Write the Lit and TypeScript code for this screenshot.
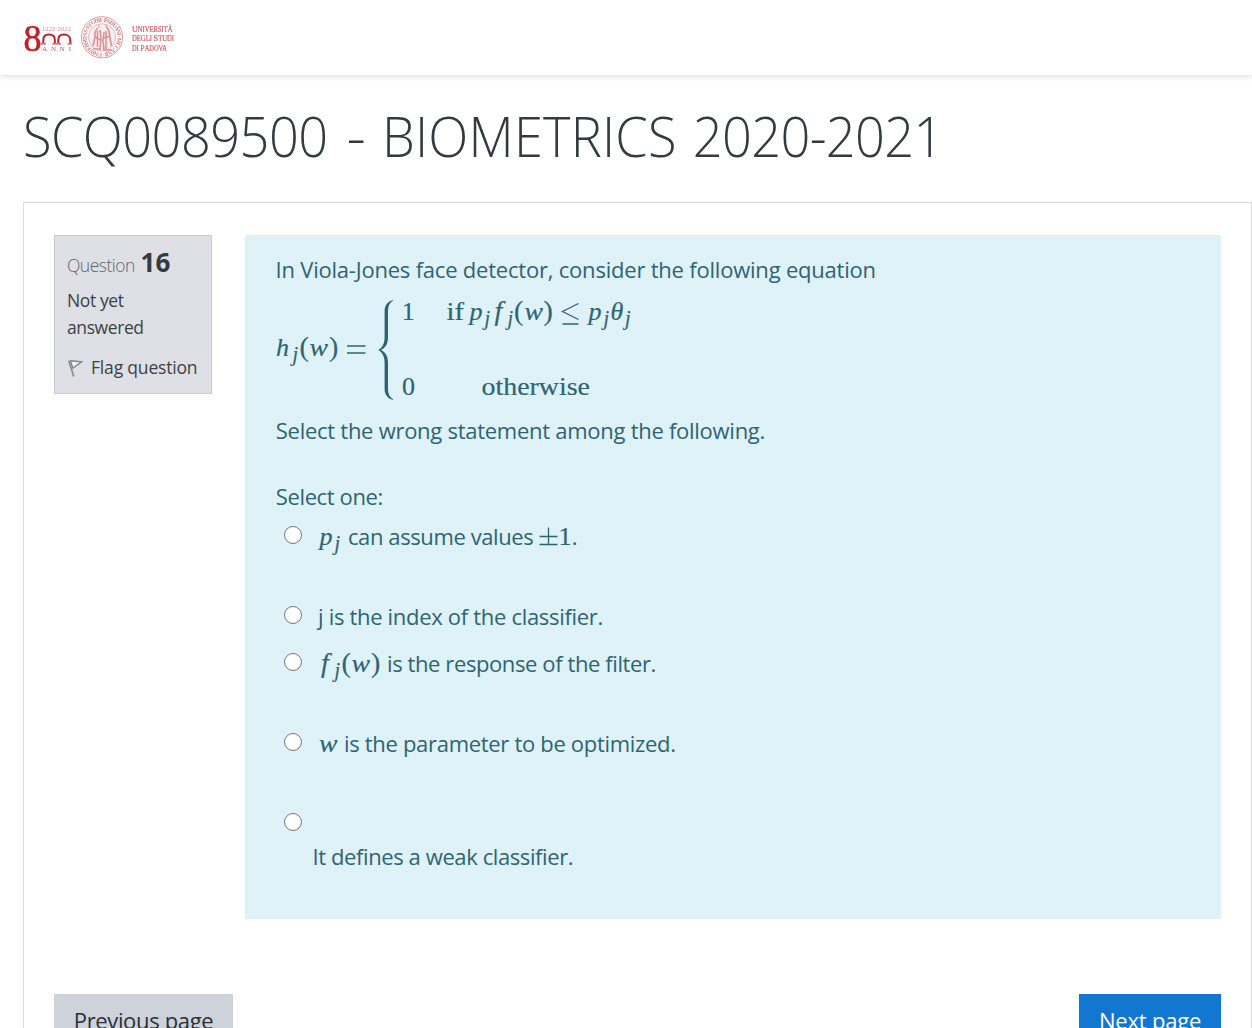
import { LitElement, html, svg, css } from "lit";
import { customElement } from "lit/decorators.js";

const mathCss = css`
  .math { overflow: visible; fill: #2f6473; font-family: "Liberation Serif", serif; font-size: 26px; letter-spacing: 0; }
  .math text { stroke: #2f6473; stroke-width: 0.200px; }
  .it { font-style: italic; }
  .f { font-style: italic; font-size: 28px; }
  .par { font-size: 28px; }
  .sub { font-style: italic; font-size: 20px; }
`;

@customElement("site-logo")
class SiteLogo extends LitElement {
  static styles = css`
    :host { display: block; }
    svg { display: block; }
    .serif { font-family: "Liberation Serif", serif; }
    .soft { filter: blur(0.4px); }
  `;
  render() {
    const ring = "UNIVERSITAS · STUDII · PADUANI · MCCXXII ·";
    return html`<svg width="152" height="46" viewBox="23 14 152 46">
      <g class="serif soft" fill="#c02026">
        <text x="23.500" y="51" font-size="37" textLength="18" lengthAdjust="spacingAndGlyphs" stroke="#c02026" stroke-width=".6">8</text>
        <path d="M43.300 43V40C43.300 36.500 45.500 34.600 49 34.600S54.800 36.500 54.800 40V43M58.300 43V40C58.300 36.500 60.500 34.600 64 34.600S70.300 36.500 70.300 40V43" fill="none" stroke="#c02026" stroke-width="2"/>
        <path d="M40.500 43.800H46M52.500 43.800H61M67.500 43.800H72" stroke="#c8454a" stroke-width="1.200" />
        <text x="42" y="31" font-size="6.500" fill="#d98f92" textLength="29" lengthAdjust="spacingAndGlyphs">1222·2022</text>
        <text x="42" y="51" font-size="7" fill="#c9565b" textLength="29">ANNI</text>
      </g>
      <g class="soft" fill="none" stroke="#dc9093">
        <circle cx="102" cy="37.300" r="20.600" stroke-width=".9" />
        <circle cx="102" cy="37.300" r="13.600" stroke-width=".6" fill="#fbeeee" />
        <path id="ring" d="M102 52.800A15.500 15.500 0 1 1 102.100 52.800" stroke="none" />
        <text class="serif" fill="#d0787b" stroke="none" font-size="5.800" font-weight="700"><textPath href="#ring" textLength="96">${ring}</textPath></text>
        <g stroke="#dc9295" stroke-width="1.600">
          <path d="M97.500 28c-2 2-3 5-2.500 9l-2 9M97.500 31v16M100 30l1 8-1 12M95 37l5 3M93 49h8" />
          <path d="M106.500 27c2 2 3 4 3 8l2 11M106 31v18M104 32l-1 9 1 9M104 38l6-2M103 50h9M98 26.500h1.500M105.500 26h1.500" />
        </g>
      </g>
      <g class="serif soft" fill="#cc5f64" stroke="#cc5f64" stroke-width=".2">
        <text x="132" y="31.600" font-size="9" textLength="40.500" lengthAdjust="spacingAndGlyphs">U<tspan font-size="7.300">NIVERSITÀ</tspan></text>
        <text x="132" y="41.300" font-size="7.300" textLength="42" lengthAdjust="spacingAndGlyphs">DEGLI <tspan font-size="9">S</tspan>TUDI</text>
        <text x="132" y="51" font-size="7.300" textLength="35" lengthAdjust="spacingAndGlyphs">DI <tspan font-size="9">P</tspan>ADOVA</text>
      </g>
    </svg>`;
  }
}

@customElement("question-info")
class QuestionInfo extends LitElement {
  static styles = css`
    :host { display: block; box-sizing: border-box; width: 158px; height: 159px; padding: 13px 12px 0;
      background: #dee0e5; border: 1px solid #c6cdd7; color: #3d4146; font-size: 17.500px; line-height: 27px; }
    .no { height: 33px; line-height: 33px; font-weight: 300; color: #62676d; white-space: nowrap; letter-spacing: -0.500px; }
    .no b { font-size: 26px; line-height: 1; font-weight: 700; color: #343a40; letter-spacing: 0.300px; margin-left: 1.500px; }
    .state { margin-top: 5px; height: 54px; letter-spacing: -0.400px; }
    .flag { display: flex; align-items: center; margin-top: 13px; white-space: nowrap; letter-spacing: -0.180px; }
    svg { width: 24px; height: 20px; flex: none; }
  `;
  render() {
    return html`
      <div class="no">Question <b>16</b></div>
      <div class="state">Not yet answered</div>
      <div class="flag">
        <svg viewBox="67 358.500 24 20" fill="none">
          <path d="M70.500 361.200L81.600 362.200L73.500 368.200" stroke="#858585" stroke-width="1.400" fill="#eceef0"/>
          <path d="M68.800 361.200L73.700 377" stroke="#8e8e8c" stroke-width="1.800"/>
          <path d="M70.400 361L73.200 369.500" stroke="#6f6f6f" stroke-width="1"/>
        </svg>Flag question
      </div>`;
  }
}

@customElement("classifier-formula")
class ClassifierFormula extends LitElement {
  static styles = [mathCss, css`
    :host { display: block; }
    svg { display: block; }
    .rule { fill: none; stroke: #2f6473; stroke-width: 1.300; }
  `];
  render() {
    const it = (x: number, y: number, t: string) => svg`<text class="it" x=${x} y=${y}>${t}</text>`;
    const w = (x: number, y: number) => svg`<text class="it" x=${x} y=${y} textLength="18.500" lengthAdjust="spacingAndGlyphs">w</text>`;
    const sub = (x: number, y: number) => svg`<text class="sub" x=${x} y=${y}>j</text>`;
    const par = (x: number, y: number, t: string) => svg`<text class="par" x=${x} y=${y}>${t}</text>`;
    const up = (x: number, y: number, t: string) => svg`<text x=${x} y=${y}>${t}</text>`;
    return html`<svg class="math" width="360" height="108" viewBox="275 296 360 108">
      ${it(276, 356, "h")}${sub(292.5, 360.5)}${par(299.5, 356, "(")}${w(309.5, 356)}${par(329, 356, ")")}
      <path class="rule" d="M347 346H365.500M347 353H365.500" />
      <path d="M393 300C387.500 301.500 384.600 305.500 384.600 311V337C384.600 343.500 382.500 347.500 378.300 350C382.500 352.500 384.600 356.500 384.600 363V389C384.600 394.500 387.500 398.500 393 400V399.200C389.800 397.500 388 394 388 389V363C388 356 385.500 352 380.800 350C385.500 348 388 344 388 337V311C388 306 389.800 302.500 393 300.800Z" />
      ${up(401.8, 320, "1")}
      <text x="446.500" y="320" textLength="17.500" lengthAdjust="spacingAndGlyphs">if</text>
      ${it(469.5, 320, "p")}${sub(484.5, 324.5)}<text class="f" x="494.500" y="320">f</text>${sub(507.5, 324.5)}
      ${par(514, 320, "(")}${w(524.5, 320)}${par(543.5, 320, ")")}
      <path class="rule" d="M578.500 303.500L562.500 311.500L578.500 319.500M562.500 324H578.500" />
      ${it(588.5, 320, "p")}${sub(603.5, 324.5)}${it(610.5, 320, "θ")}${sub(625, 324.5)}
      ${up(402, 395, "0")}
      <text x="481.500" y="395" textLength="108.500" lengthAdjust="spacingAndGlyphs">otherwise</text>
    </svg>`;
  }
}

@customElement("question-body")
class QuestionBody extends LitElement {
  static styles = [mathCss, css`
    :host { display: block; box-sizing: border-box; width: 976px; height: 684px; padding: 18px 30px 0;
      background: #def2f8; color: #2f6473; font-size: 22px; line-height: 33px; white-space: nowrap; }
    .intro { letter-spacing: -0.210px; text-indent: 0.500px; }
    classifier-formula { margin: 10px 0; }
    .task { letter-spacing: -0.270px; text-indent: 0.800px; }
    .prompt { margin: 33px 0 7px; letter-spacing: -0.380px; text-indent: 0.800px; }
    .opt { display: flex; height: 80px; padding-left: 9.400px; }
    .opt.tight { height: 47px; }
    .radio { flex: none; box-sizing: border-box; width: 18px; height: 18px; margin: 6px 15.600px 0 0;
      border: 1.500px solid #767676; border-radius: 50%; background: #fff; }
    .answer { height: 33px; letter-spacing: -0.400px; }
    .loose { letter-spacing: -0.310px; }
    .below { padding: 33px 0 0; margin-left: -5.500px; }
    .rule { fill: none; stroke: #2f6473; stroke-width: 1.300; }
  `];
  render() {
    const row = (content: unknown, size = "", text = "") =>
      html`<label class="opt ${size}"><span class="radio"></span><span class="answer ${text}">${content}</span></label>`;
    return html`
      <div class="intro">In Viola-Jones face detector, consider the following equation</div>
      <classifier-formula></classifier-formula>
      <div class="task">Select the wrong statement among the following.</div>
      <div class="prompt">Select one:</div>
      ${row(html`<svg class="math" width="30" height="20"><text class="it" x="1.500" y="20">p</text><text class="sub" x="16.500" y="24.500">j</text></svg>can assume values <svg class="math" width="33" height="20"><path class="rule" d="M0.500 11.500H18.500M9.500 2.500V19.500M0.500 19.500H18.500"/><text x="19.500" y="20">1</text></svg>.`)}
      ${row("j is the index of the classifier.", "tight", "loose")}
      ${row(html`<svg class="math" width="69" height="20"><text class="f" x="3" y="20">f</text><text class="sub" x="16.500" y="24.500">j</text><text class="par" x="23.500" y="20">(</text><text class="it" x="33.500" y="20" textLength="18.500" lengthAdjust="spacingAndGlyphs">w</text><text class="par" x="53" y="20">)</text></svg>is the response of the filter.`)}
      ${row(html`<svg class="math" width="26" height="20"><text class="it" x="1" y="20" textLength="18.500" lengthAdjust="spacingAndGlyphs">w</text></svg>is the parameter to be optimized.`, "", "loose")}
      ${row("It defines a weak classifier.", "", "below")}
    `;
  }
}

@customElement("app-root")
class AppRoot extends LitElement {
  static styles = css`
    :host { display: block; height: 1028px; overflow: hidden; background: #fff;
      font-family: "Open Sans", "Noto Sans", sans-serif; }
    header { box-sizing: border-box; height: 75px; padding: 14px 23px; box-shadow: 0 2px 5px rgba(0, 0, 0, 0.120); }
    h1 { margin: 0; padding: 22px 0 0 24.500px; height: 105px; font: 300 56px/76px "Open Sans", sans-serif; color: #343a40;
      white-space: nowrap; transform: scaleX(0.935); transform-origin: 0 0; }
    .code { letter-spacing: -0.600px; }
    .dash { display: inline-block; margin: 0 4px 0 7px; transform: scaleX(1.150); }
    .subject { letter-spacing: 0.200px; }
    .year { letter-spacing: -0.700px; margin-left: 2.500px; }
    main { box-sizing: border-box; width: 1229px; height: 900px; margin-left: 23px; padding: 32px 30px 0;
      border: 1px solid #dcdcdc; }
    .question { display: flex; justify-content: space-between; align-items: flex-start; }
    .nav { display: flex; justify-content: space-between; margin-top: 75px; }
    button { height: 55px; margin: 0; padding: 10px 0 12px; border: 0; border-radius: 0; font: 22px/33px "Open Sans", sans-serif; }
    .prev { width: 179px; background: #ced2da; color: #2b3036; letter-spacing: -0.350px; }
    .next { width: 142px; background: #1177d1; color: #fff; letter-spacing: -0.200px; }
  `;
  render() {
    return html`
      <header><site-logo></site-logo></header>
      <h1><span class="code">SCQ0089500</span> <span class="dash">-</span> <span class="subject">BIOMETRICS</span> <span class="year">2020-2021</span></h1>
      <main>
        <div class="question"><question-info></question-info><question-body></question-body></div>
        <div class="nav"><button class="prev">Previous page</button><button class="next">Next page</button></div>
      </main>`;
  }
}
